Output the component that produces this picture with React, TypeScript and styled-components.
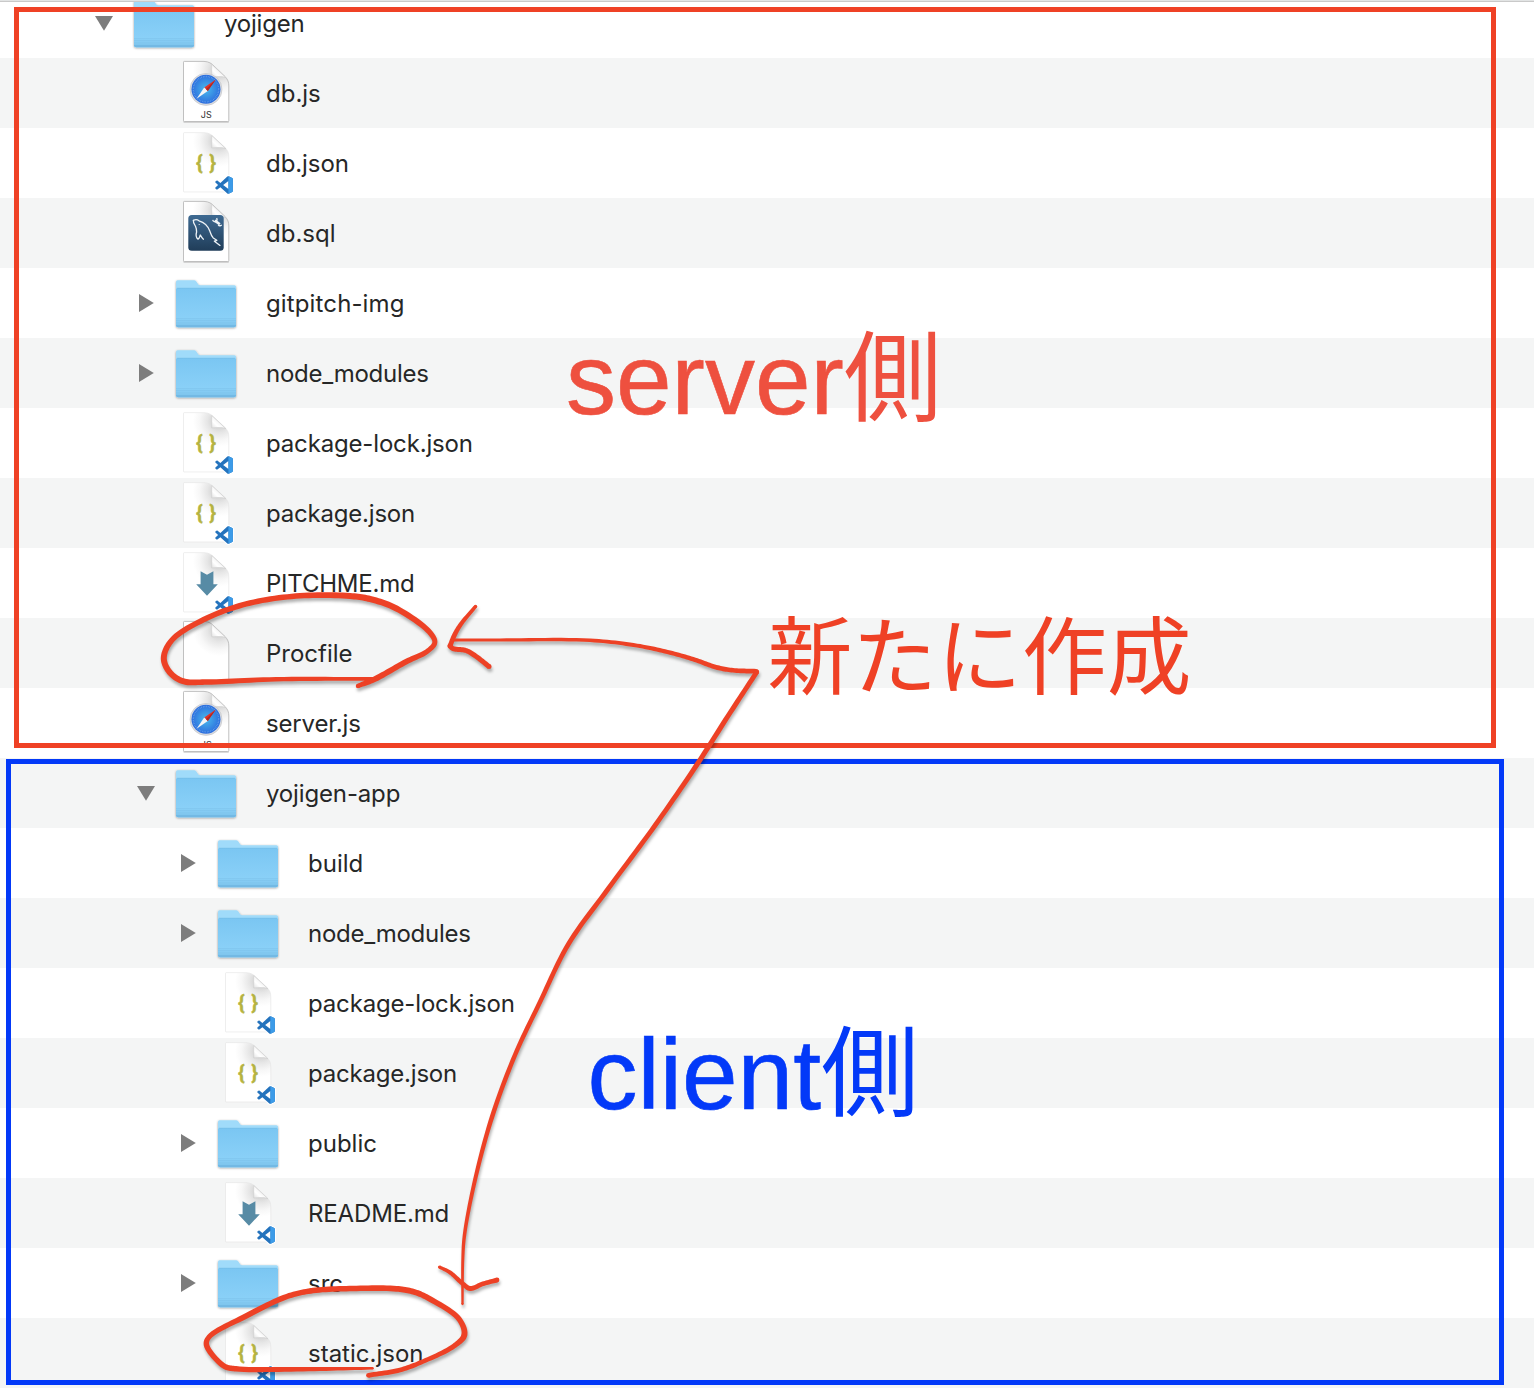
import React from "react";
import styled, { createGlobalStyle } from "styled-components";

const GlobalStyle = createGlobalStyle`
  html, body { margin: 0; padding: 0; background: #ffffff; }
  body { overflow: hidden; }
`;

const Screen = styled.main`
  position: relative;
  width: 1534px;
  height: 1388px;
  overflow: hidden;
  background: #ffffff;
  font-family: Inter, "Liberation Sans", sans-serif;
`;

const HeaderEdge = styled.div`
  position: absolute;
  inset: 0 0 auto 0;
  height: 1px;
  background: #e2e4e4;
  border-bottom: 1px solid #c9c9c9;
`;

const FileList = styled.div`
  display: flex;
  flex-direction: column;
  margin-top: -12px;
`;

const Row = styled.div<{ $level: number; $shaded: boolean }>`
  display: flex;
  align-items: center;
  flex: none;
  height: 70px;
  padding-left: ${(p) => 84 + p.$level * 42}px;
  background: ${(p) => (p.$shaded ? "#f4f5f5" : "#ffffff")};
`;

const Toggle = styled.div`
  display: flex;
  align-items: center;
  justify-content: center;
  width: 40px;
  height: 70px;
  margin-right: 9px;
`;

const Glyph = styled.svg`
  display: block;
  flex: none;
  overflow: visible;
`;

const FileName = styled.span<{ $tracking: number }>`
  margin-left: 29px;
  padding-top: 2px;
  color: #262727;
  font-size: 24px;
  font-weight: 400;
  line-height: 30px;
  letter-spacing: ${(p) => p.$tracking}px;
  white-space: nowrap;
`;

const Frame = styled.div<{ $color: string; $x: number; $y: number; $w: number; $h: number }>`
  position: absolute;
  box-sizing: border-box;
  left: ${(p) => p.$x}px;
  top: ${(p) => p.$y}px;
  width: ${(p) => p.$w}px;
  height: ${(p) => p.$h}px;
  border: 5px solid ${(p) => p.$color};
`;

const Note = styled.div<{ $color: string; $x: number; $y: number; $size: number }>`
  position: absolute;
  display: flex;
  align-items: baseline;
  left: ${(p) => p.$x}px;
  top: ${(p) => p.$y}px;
  color: ${(p) => p.$color};
  font-family: "Liberation Sans", "Noto Sans CJK JP", sans-serif;
  font-size: ${(p) => p.$size}px;
  line-height: 120px;
  white-space: nowrap;
`;

const Latin = styled.span`
  -webkit-text-stroke: 0.6px currentColor;
`;

const Kanji = styled.span`
  font-size: 98px;
  transform: translateY(-1px);
`;

const Ink = styled.svg`
  position: absolute;
  left: 0;
  top: 0;
  filter: drop-shadow(1px 3px 1.5px rgba(0, 0, 0, 0.3));
`;

type Kind = "folder" | "js" | "json" | "sql" | "md" | "blank";

interface Entry {
  name: string;
  kind: Kind;
  level: number;
  open?: boolean;
  tracking?: number;
}

const entries: Entry[] = [
  { name: "yojigen", kind: "folder", level: 0, open: true, tracking: -0.2 },
  { name: "db.js", kind: "js", level: 1 },
  { name: "db.json", kind: "json", level: 1, tracking: -0.07 },
  { name: "db.sql", kind: "sql", level: 1 },
  { name: "gitpitch-img", kind: "folder", level: 1, tracking: 0.13 },
  { name: "node_modules", kind: "folder", level: 1, tracking: -0.26 },
  { name: "package-lock.json", kind: "json", level: 1, tracking: -0.16 },
  { name: "package.json", kind: "json", level: 1, tracking: -0.2 },
  { name: "PITCHME.md", kind: "md", level: 1, tracking: -0.22 },
  { name: "Procfile", kind: "blank", level: 1 },
  { name: "server.js", kind: "js", level: 1, tracking: -0.15 },
  { name: "yojigen-app", kind: "folder", level: 1, open: true, tracking: -0.15 },
  { name: "build", kind: "folder", level: 2 },
  { name: "node_modules", kind: "folder", level: 2, tracking: -0.26 },
  { name: "package-lock.json", kind: "json", level: 2, tracking: -0.16 },
  { name: "package.json", kind: "json", level: 2, tracking: -0.2 },
  { name: "public", kind: "folder", level: 2 },
  { name: "README.md", kind: "md", level: 2, tracking: -0.15 },
  { name: "src", kind: "folder", level: 2 },
  { name: "static.json", kind: "json", level: 2 },
];

const Defs = () => (
  <svg width="0" height="0" style={{ position: "absolute" }}>
    <defs>
      <linearGradient id="folderFront" x1="0" y1="0" x2="0" y2="1">
        <stop offset="0" stopColor="#7ac6f2" />
        <stop offset="1" stopColor="#8ed3f9" />
      </linearGradient>
      <linearGradient id="fold" x1="0.1" y1="0.95" x2="0.7" y2="0.35">
        <stop offset="0" stopColor="#e6e6e6" />
        <stop offset="0.4" stopColor="#ffffff" />
        <stop offset="1" stopColor="#ededed" />
      </linearGradient>
      <radialGradient id="paper" gradientUnits="userSpaceOnUse" cx="44" cy="12" r="26">
        <stop offset="0.2" stopColor="#d2d2d2" />
        <stop offset="0.45" stopColor="#e6e6e6" />
        <stop offset="0.75" stopColor="#f7f7f7" />
        <stop offset="1" stopColor="#ffffff" />
      </radialGradient>
      <radialGradient id="compass">
        <stop offset="0" stopColor="#48b9ec" />
        <stop offset="1" stopColor="#2d6ede" />
      </radialGradient>
      <linearGradient id="sqlTile" x1="0" y1="0" x2="0" y2="1">
        <stop offset="0" stopColor="#3e6a92" />
        <stop offset="1" stopColor="#203d59" />
      </linearGradient>
      <filter id="soft" x="-20%" y="-20%" width="140%" height="140%">
        <feDropShadow dx="0" dy="0.8" stdDeviation="0.8" floodColor="#000000" floodOpacity="0.4" />
      </filter>
    </defs>
  </svg>
);

const Folder = () => (
  <g>
    <path
      d="M1 57.2V13.9Q1 12.2 2.5 12.2H19Q20.5 12.2 21.3 13.4L23 16Q23.8 17.2 25.2 17.2H59.5Q61 17.2 61 18.7V57.2Q61 59.2 59 59.2H3Q1 59.2 1 57.2Z"
      fill="#a0dbfa"
      filter="url(#soft)"
    />
    <path d="M1 21.6Q1 20 2.5 20H59.5Q61 20 61 21.6V57.4Q61 59.2 59 59.2H3Q1 59.2 1 57.4Z" fill="url(#folderFront)" />
    <path d="M2 20.2H60" fill="none" stroke="#72bce6" strokeWidth="0.6" />
    <g fill="#73b9e4">
      <rect x="1" y="50.4" width="60" height="0.8" opacity="0.55" />
      <rect x="1" y="52.4" width="60" height="0.9" opacity="0.7" />
      <rect x="1" y="54.5" width="60" height="1" opacity="0.85" />
      <path d="M1 56.6H61V57.4Q61 59.2 59 59.2H3Q1 59.2 1 57.4Z" />
    </g>
  </g>
);

const Page = ({ faint }: { faint?: boolean }) => (
  <g transform={faint ? "translate(0 1.3) scale(1 0.985)" : undefined}>
    <path
      d="M8.5 4.2Q8.5 3.4 9.3 3.4H29C34 3.6 36.5 5.5 39 8L50 18.5C52.8 21.5 53.8 24 53.8 28V62.6Q53.8 63.6 52.8 63.6H9.3Q8.5 63.6 8.5 62.8Z"
      fill="url(#paper)"
      stroke={faint ? "#e2e2e2" : "#b9b9b9"}
      strokeWidth={faint ? 0.6 : 0.9}
    />
    <path d="M36.7 6.3L51 19.8C48 18 43 18.7 36.7 18.9Z" fill="url(#fold)" stroke="#c8c8c8" strokeWidth="0.5" />
    {!faint && <path d="M8.5 64.2H53.8" stroke="#8c8c8c" strokeOpacity="0.5" strokeWidth="0.8" />}
  </g>
);

const Compass = () => (
  <g>
    <circle cx="31" cy="31.4" r="16" fill="#dcdde0" stroke="#b8bac0" strokeWidth="0.5" />
    <circle cx="31" cy="31.2" r="14.5" fill="url(#compass)" />
    <circle cx="31" cy="31.2" r="12.7" fill="none" stroke="#bfe0fa" strokeOpacity="0.5" strokeWidth="1.3" strokeDasharray="0.5 1.16" />
    <path d="M40.8 21.6L29.2 29.4L32.8 33Z" fill="#e0332c" />
    <path d="M21.6 40.8L29.2 29.4L32.8 33Z" fill="#f3f5f7" />
    <path d="M40.8 21.6L31 31.2L32.8 33Z" fill="#b5261f" />
    <text x="31.4" y="60" textAnchor="middle" fontFamily="Inter, sans-serif" fontSize="9" fill="#303030" letterSpacing="0.3">
      JS
    </text>
  </g>
);

const CodeBadge = () => (
  <g transform="translate(40.2 48.2) scale(0.735)">
    <path
      d="M23.15 2.587L18.21.21a1.494 1.494 0 0 0-1.705.29l-9.46 8.63-4.12-3.128a.999.999 0 0 0-1.276.057L.327 7.261A1 1 0 0 0 .326 8.74L3.899 12 .326 15.26a1 1 0 0 0 .001 1.479L1.65 17.94a.999.999 0 0 0 1.276.057l4.12-3.128 9.46 8.63a1.492 1.492 0 0 0 1.704.29l4.942-2.377A1.5 1.5 0 0 0 24 20.06V3.939a1.5 1.5 0 0 0-.85-1.352z"
      fill="#ffffff"
      stroke="#ffffff"
      strokeWidth="3"
      strokeLinejoin="round"
    />
    <path
      d="M23.15 2.587L18.21.21a1.494 1.494 0 0 0-1.705.29l-9.46 8.63-4.12-3.128a.999.999 0 0 0-1.276.057L.327 7.261A1 1 0 0 0 .326 8.74L3.899 12 .326 15.26a1 1 0 0 0 .001 1.479L1.65 17.94a.999.999 0 0 0 1.276.057l4.12-3.128 9.46 8.63a1.492 1.492 0 0 0 1.704.29l4.942-2.377A1.5 1.5 0 0 0 24 20.06V3.939a1.5 1.5 0 0 0-.85-1.352zm-5.146 14.861L10.826 12l7.178-5.448v10.896z"
      fill="#2473bd"
    />
    <path d="M18.004 1V23L18.21 23.79L23.15 21.41A1.5 1.5 0 0 0 24 20.06V3.94A1.5 1.5 0 0 0 23.15 2.59L18.21.21Z" fill="#3c9be8" />
  </g>
);

const Braces = () => (
  <g fontFamily="Roboto, sans-serif" fontWeight="700" fontSize="20.5" fill="#b5b341" stroke="#b5b341" strokeWidth="0.4" textAnchor="middle">
    <text x="24.3" y="41.8">{"{"}</text>
    <text x="37.7" y="41.8">{"}"}</text>
  </g>
);

const Dolphin = () => (
  <g>
    <rect x="13.3" y="17" width="35.4" height="35.7" rx="3.5" fill="url(#sqlTile)" />
    <g fill="none" stroke="#eef3f7" strokeWidth="1.3" strokeLinecap="round" strokeLinejoin="round">
      <path d="M18.4 22.4C20 21.6 22.5 21.6 24 22.8C29 24.2 33 28 34.8 33C35.8 36 36.5 38.5 38.3 40L41.8 42.3L39.4 43.2L45 47.4" />
      <path d="M18.4 22.4C18 24.5 19.5 26.5 20.5 28.2C21.3 30 21.6 32 21.6 34C20.8 36.5 21 39.6 23 41.2C24.6 40.5 24.6 38.6 25.3 37C26.3 38.6 27 40 28.4 41.2" />
    </g>
    <circle cx="24.2" cy="26.5" r="0.6" fill="#eef3f7" />
    <path d="M39.8 22.6L44.8 26.2" stroke="#eef3f7" strokeWidth="2.6" />
    <path d="M37.7 21.8A2.4 2.4 0 0 0 41 23.4A2.4 2.4 0 0 0 41.6 20.2M43.2 26.8A2 2 0 0 0 45.6 27.6L46.8 27.2" fill="none" stroke="#eef3f7" strokeWidth="1.3" />
  </g>
);

const FileGlyph = ({ kind }: { kind: Kind }) => (
  <Glyph width="62" height="70" viewBox="0 0 62 70">
    {kind === "folder" && <Folder />}
    {kind !== "folder" && <Page faint={kind === "json" || kind === "md"} />}
    {kind === "js" && <Compass />}
    {kind === "sql" && <Dolphin />}
    {kind === "json" && <Braces />}
    {kind === "md" && <path d="M25.6 23.2L32 26.8L38.4 23.2V36.3H42.8L32 47.8L21.2 36.3H25.6Z" fill="#578ba5" />}
    {(kind === "json" || kind === "md") && <CodeBadge />}
  </Glyph>
);

const Disclosure = ({ open }: { open?: boolean }) => (
  <Glyph width="18" height="18" viewBox="0 0 18 18">
    <path d={open ? "M0 2H18L9 16.7Z" : "M2 0L16.8 9L2 18Z"} fill="#7d7d7d" />
  </Glyph>
);

type Point = [number, number, number];

const mix = (a: Point, b: Point, t: number): Point => [
  a[0] + (b[0] - a[0]) * t,
  a[1] + (b[1] - a[1]) * t,
  a[2] + (b[2] - a[2]) * t,
];

// Centripetal Catmull-Rom curve through the points; the third number is the pen width.
function sample(points: Point[], steps = 12): Point[] {
  const last = points.length - 1;
  const all = [mix(points[0], points[1], -1), ...points, mix(points[last], points[last - 1], -1)];
  const out: Point[] = [];
  for (let i = 1; i < all.length - 2; i++) {
    const [a, b, c, d] = [all[i - 1], all[i], all[i + 1], all[i + 2]];
    const gap = (p: Point, q: Point) => Math.sqrt(Math.hypot(q[0] - p[0], q[1] - p[1]));
    const t1 = gap(a, b);
    const t2 = t1 + gap(b, c);
    const t3 = t2 + gap(c, d);
    for (let s = 0; s < steps; s++) {
      const t = t1 + ((t2 - t1) * s) / steps;
      const a1 = mix(a, b, t / t1);
      const a2 = mix(b, c, (t - t1) / (t2 - t1));
      const a3 = mix(c, d, (t - t2) / (t3 - t2));
      const b1 = mix(a1, a2, t / t2);
      const b2 = mix(a2, a3, (t - t1) / (t3 - t1));
      const [x, y] = mix(b1, b2, (t - t1) / (t2 - t1));
      out.push([x, y, b[2] + ((c[2] - b[2]) * s) / steps]);
    }
  }
  out.push(points[last]);
  return out;
}

// Outline of a stroke whose width follows the pen pressure.
function outline(path: Point[]): string {
  const left: string[] = [];
  const right: string[] = [];
  path.forEach((p, i) => {
    const before = path[Math.max(i - 1, 0)];
    const after = path[Math.min(i + 1, path.length - 1)];
    const length = Math.hypot(after[0] - before[0], after[1] - before[1]) || 1;
    const nx = (-(after[1] - before[1]) / length) * (p[2] / 2);
    const ny = ((after[0] - before[0]) / length) * (p[2] / 2);
    left.push(`${(p[0] + nx).toFixed(2)} ${(p[1] + ny).toFixed(2)}`);
    right.unshift(`${(p[0] - nx).toFixed(2)} ${(p[1] - ny).toFixed(2)}`);
  });
  return `M${[...left, ...right].join("L")}Z`;
}

const strokes: Point[][] = [
  [
    [358, 686, 4.5], [375, 679, 5.8], [406.5, 661.5, 5.5], [427, 651.5, 5], [434.8, 642.5, 5], [429.5, 632, 5.5],
    [396.5, 608.5, 6], [372, 599.5, 6.3], [350, 596, 6], [300, 595.8, 5.5], [250, 603, 5.5], [207, 618, 5.5],
    [172, 640, 5.5], [163.8, 658, 6], [169.5, 672, 6], [183, 681.2, 6], [207, 682, 5.5], [276, 679.3, 4.5], [377, 678.8, 3.5],
  ],
  [
    [368.5, 1375.3, 4.8], [400, 1370, 4.8], [423, 1361.5, 4.5], [454, 1346, 5], [464.3, 1335, 6], [459, 1319, 5.3],
    [430, 1299, 5.5], [415, 1292.2, 5.8], [396.5, 1288.8, 5.8], [353, 1288.5, 5.5], [313, 1290.6, 5.5], [287, 1296.5, 5.5],
    [247, 1315.5, 5.5], [209, 1337, 5], [206.5, 1345, 5.5], [224, 1366, 5.5], [236, 1368.8, 5.5], [303, 1369.2, 4.5], [372.5, 1368.3, 2.5],
  ],
  [[475.5, 606.5, 3.5], [461, 624, 4.3], [454.5, 635, 4.8], [450, 646, 4.8]],
  [[450, 646, 5], [453, 648.6, 5], [466, 650.5, 5], [475.5, 656, 5], [489, 666.5, 5]],
  [
    [453, 640, 3], [500, 640, 3.2], [590, 640.3, 3.6], [637, 645.6, 4], [670, 652.6, 4.3], [695, 659.8, 4.5], [716, 667.2, 4.8], [733, 670.3, 4.6],
    [756, 671.3, 4.8],
  ],
  [
    [756.8, 672, 4.8], [728, 716, 5], [697, 764.5, 5], [655, 825.5, 4.8], [608, 889, 4.8], [568.5, 944, 4.8], [540, 1002, 4.5],
    [515, 1055, 4.5], [492, 1117, 4.5], [475, 1180, 4], [464.5, 1235, 3.5], [462.8, 1260, 3], [462.5, 1304, 2.3],
  ],
  [[439.5, 1267, 3.2], [450, 1272.5, 4], [462, 1283, 4.5], [470, 1288.5, 5], [483, 1283.8, 4.6], [497, 1280, 4.8]],
];

const PenStroke = ({ points }: { points: Point[] }) => {
  const path = sample(points);
  const end = path[path.length - 1];
  return (
    <g fill="#ed4125">
      <path d={outline(path)} />
      <circle cx={path[0][0]} cy={path[0][1]} r={path[0][2] / 2} />
      <circle cx={end[0]} cy={end[1]} r={end[2] / 2} />
    </g>
  );
};

export default function App() {
  return (
    <Screen>
      <GlobalStyle />
      <Defs />
      <FileList>
        {entries.map((e, i) => (
          <Row key={i} $level={e.level} $shaded={i % 2 === 1}>
            <Toggle>{e.kind === "folder" && <Disclosure open={e.open} />}</Toggle>
            <FileGlyph kind={e.kind} />
            <FileName $tracking={e.tracking ?? 0}>{e.name}</FileName>
          </Row>
        ))}
      </FileList>
      <HeaderEdge />
      <Frame $color="#ef4125" $x={14} $y={7} $w={1482} $h={741} />
      <Frame $color="#0339f8" $x={6} $y={759} $w={1498} $h={626} />
      <Note $color="#ee503f" $x={566} $y={319} $size={100}>
        <Latin>server</Latin>
        <Kanji>側</Kanji>
      </Note>
      <Note $color="#0339f8" $x={587.5} $y={1014} $size={100}>
        <Latin>client</Latin>
        <Kanji>側</Kanji>
      </Note>
      <Note $color="#ef4125" $x={767.5} $y={599} $size={84.8}>新たに作成</Note>
      <Ink width="1534" height="1388" viewBox="0 0 1534 1388">
        {strokes.map((points, i) => (
          <PenStroke key={i} points={points} />
        ))}
      </Ink>
    </Screen>
  );
}
